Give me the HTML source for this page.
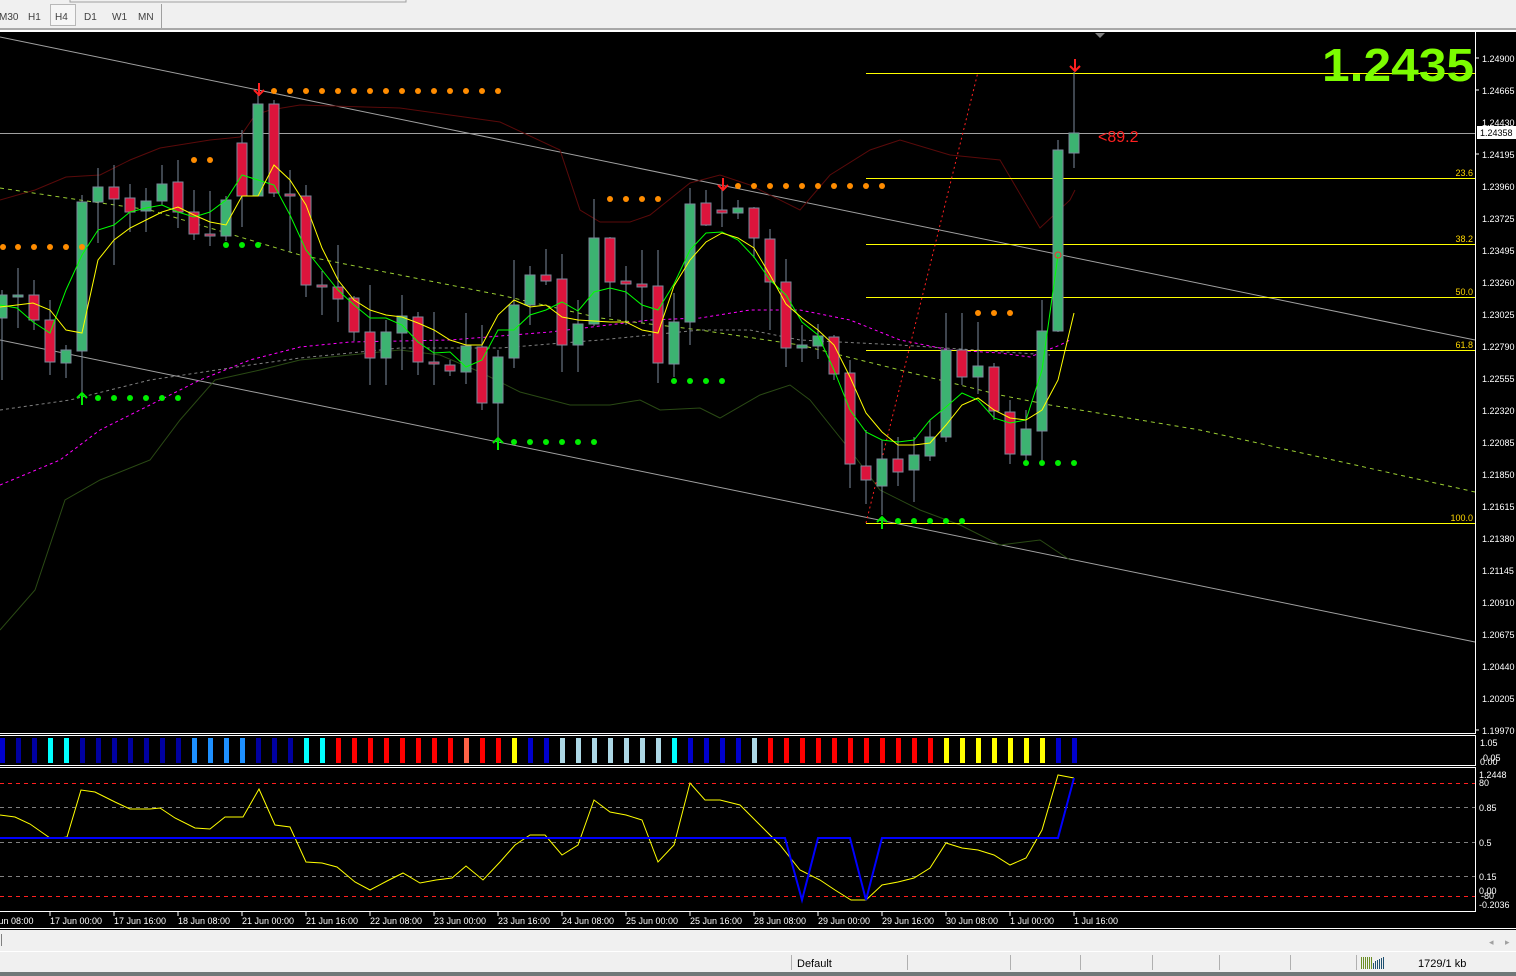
<!DOCTYPE html>
<html><head><meta charset="utf-8"><style>
html,body{margin:0;padding:0;background:#000;width:1516px;height:976px;overflow:hidden}
svg{display:block}
text{font-family:"Liberation Sans",sans-serif}
</style></head><body>
<svg width="1516" height="976" viewBox="0 0 1516 976" xmlns="http://www.w3.org/2000/svg">
<!-- toolbar -->
<rect x="0" y="0" width="1516" height="30" fill="#f0f0f0"/>
<rect x="70" y="-2" width="336" height="4" fill="none" stroke="#a0a0a0"/>
<rect x="50.5" y="4.5" width="25" height="21" fill="#f6f6f6" stroke="#b8b8b8"/>
<line x1="161.5" y1="4" x2="161.5" y2="28" stroke="#a0a0a0"/>
<g font-size="10" fill="#404040">
<text x="-1" y="20">M30</text><text x="28" y="20">H1</text><text x="55" y="20">H4</text>
<text x="84" y="20">D1</text><text x="112" y="20">W1</text><text x="138" y="20">MN</text>
</g>
<rect x="0" y="28" width="1516" height="2" fill="#a8a8a8"/>
<rect x="0" y="30" width="1516" height="2" fill="#fff"/>
<rect x="0" y="32" width="1516" height="898" fill="#000"/>
<g fill="none" stroke="#fff" stroke-width="1">
<path d="M0 733.5H1475.5V32"/>
<path d="M0 735.5H1475.5V765.5H0"/>
<path d="M0 767.5H1475.5V911.5H0"/>
</g>
<polygon points="1095,33 1105,33 1100,38" fill="#808080"/>
<g stroke="#a0a0a0" stroke-width="1">
<line x1="0" y1="37" x2="1475" y2="340"/>
<line x1="0" y1="340" x2="1475" y2="642"/>
<line x1="0" y1="133.5" x2="1475" y2="133.5"/>
</g>
<polyline fill="none" stroke="#5a0a0a" stroke-width="1" points="0,200 35,190 66,177 100,175 130,160 160,148 210,140 240,137 255,115 270,110 300,105 400,108 450,115 500,122 560,150 580,210 600,222 630,222 650,215 690,183 720,175 750,185 800,210 830,175 870,150 900,140 950,155 1000,160 1040,228 1070,200 1075,190"/>
<polyline fill="none" stroke="#2a4a14" stroke-width="1" points="0,630 35,590 65,500 100,480 150,460 180,420 215,380 260,370 300,360 350,355 400,350 440,355 480,372 520,392 570,405 610,405 640,400 660,410 700,408 720,418 760,395 790,385 810,400 850,450 880,490 920,510 960,525 1000,545 1040,540 1070,560"/>
<polyline fill="none" stroke="#808080" stroke-width="1" stroke-dasharray="3,3" points="0,410 70,400 150,380 250,365 300,358 400,348 500,348 600,340 700,330 750,330 800,340 900,345 1050,355"/>
<polyline fill="none" stroke="#ff00ff" stroke-width="1" stroke-dasharray="3,3" points="0,485 60,460 100,430 150,405 200,380 250,360 300,347 350,342 450,340 550,332 650,320 700,318 750,310 800,310 850,320 900,340 950,350 1000,353 1030,357 1060,345 1070,340"/>
<polyline fill="none" stroke="#9acd32" stroke-width="1" stroke-dasharray="4,4" points="0,188 80,200 150,210 250,240 300,255 400,275 500,295 600,318 700,330 800,345 900,370 1000,395 1050,405 1200,430 1475,492"/>
<g stroke="#ffff00" stroke-width="1" shape-rendering="crispEdges">
<line x1="866" y1="73.5" x2="1475" y2="73.5"/><line x1="866" y1="178.5" x2="1475" y2="178.5"/>
<line x1="866" y1="244.5" x2="1475" y2="244.5"/><line x1="866" y1="297.5" x2="1475" y2="297.5"/>
<line x1="866" y1="350.5" x2="1475" y2="350.5"/><line x1="866" y1="523.5" x2="1475" y2="523.5"/>
</g>
<g font-size="9" fill="#ffd700" text-anchor="end">
<text x="1473" y="176">23.6</text><text x="1473" y="242">38.2</text><text x="1473" y="295">50.0</text>
<text x="1473" y="348">61.8</text><text x="1473" y="521">100.0</text>
</g>
<line x1="866" y1="523" x2="978" y2="72" stroke="#ff2020" stroke-width="1" stroke-dasharray="2,3"/>
<g stroke="#7b8a9c" stroke-width="1">
<line x1="2" y1="290" x2="2" y2="380"/><rect x="-3" y="295" width="10" height="23" fill="#3cb371"/>
<line x1="18" y1="268" x2="18" y2="328"/><rect x="13" y="295" width="10" height="2" fill="#3cb371"/>
<line x1="34" y1="280" x2="34" y2="330"/><rect x="29" y="295" width="10" height="25" fill="#dc143c"/>
<line x1="50" y1="300" x2="50" y2="375"/><rect x="45" y="320" width="10" height="42" fill="#dc143c"/>
<line x1="66" y1="345" x2="66" y2="378"/><rect x="61" y="350" width="10" height="13" fill="#3cb371"/>
<line x1="82" y1="195" x2="82" y2="395"/><rect x="77" y="202" width="10" height="149" fill="#3cb371"/>
<line x1="98" y1="168" x2="98" y2="243"/><rect x="93" y="187" width="10" height="15" fill="#3cb371"/>
<line x1="114" y1="165" x2="114" y2="265"/><rect x="109" y="187" width="10" height="12" fill="#dc143c"/>
<line x1="130" y1="184" x2="130" y2="232"/><rect x="125" y="198" width="10" height="14" fill="#dc143c"/>
<line x1="146" y1="188" x2="146" y2="232"/><rect x="141" y="201" width="10" height="10" fill="#3cb371"/>
<line x1="162" y1="165" x2="162" y2="205"/><rect x="157" y="184" width="10" height="17" fill="#3cb371"/>
<line x1="178" y1="160" x2="178" y2="228"/><rect x="173" y="182" width="10" height="30" fill="#dc143c"/>
<line x1="194" y1="190" x2="194" y2="240"/><rect x="189" y="212" width="10" height="22" fill="#dc143c"/>
<line x1="210" y1="191" x2="210" y2="246"/><rect x="205" y="234" width="10" height="2" fill="#dc143c"/>
<line x1="226" y1="196" x2="226" y2="241"/><rect x="221" y="200" width="10" height="36" fill="#3cb371"/>
<line x1="242" y1="130" x2="242" y2="227"/><rect x="237" y="143" width="10" height="53" fill="#dc143c"/>
<line x1="258" y1="95" x2="258" y2="196"/><rect x="253" y="104" width="10" height="92" fill="#3cb371"/>
<line x1="274" y1="100" x2="274" y2="197"/><rect x="269" y="104" width="10" height="89" fill="#dc143c"/>
<line x1="290" y1="170" x2="290" y2="252"/><rect x="285" y="194" width="10" height="2" fill="#dc143c"/>
<line x1="306" y1="185" x2="306" y2="297"/><rect x="301" y="196" width="10" height="89" fill="#dc143c"/>
<line x1="322" y1="271" x2="322" y2="315"/><rect x="317" y="285" width="10" height="2" fill="#dc143c"/>
<line x1="338" y1="245" x2="338" y2="322"/><rect x="333" y="287" width="10" height="12" fill="#dc143c"/>
<line x1="354" y1="296" x2="354" y2="341"/><rect x="349" y="298" width="10" height="34" fill="#dc143c"/>
<line x1="370" y1="285" x2="370" y2="385"/><rect x="365" y="332" width="10" height="26" fill="#dc143c"/>
<line x1="386" y1="320" x2="386" y2="385"/><rect x="381" y="332" width="10" height="26" fill="#3cb371"/>
<line x1="402" y1="295" x2="402" y2="370"/><rect x="397" y="316" width="10" height="17" fill="#3cb371"/>
<line x1="418" y1="312" x2="418" y2="375"/><rect x="413" y="317" width="10" height="45" fill="#dc143c"/>
<line x1="434" y1="312" x2="434" y2="385"/><rect x="429" y="362" width="10" height="2" fill="#dc143c"/>
<line x1="450" y1="360" x2="450" y2="376"/><rect x="445" y="365" width="10" height="6" fill="#dc143c"/>
<line x1="466" y1="313" x2="466" y2="384"/><rect x="461" y="346" width="10" height="26" fill="#3cb371"/>
<line x1="482" y1="325" x2="482" y2="410"/><rect x="477" y="347" width="10" height="56" fill="#dc143c"/>
<line x1="498" y1="350" x2="498" y2="445"/><rect x="493" y="357" width="10" height="46" fill="#3cb371"/>
<line x1="514" y1="260" x2="514" y2="368"/><rect x="509" y="305" width="10" height="53" fill="#3cb371"/>
<line x1="530" y1="266" x2="530" y2="325"/><rect x="525" y="275" width="10" height="30" fill="#3cb371"/>
<line x1="546" y1="249" x2="546" y2="285"/><rect x="541" y="275" width="10" height="6" fill="#dc143c"/>
<line x1="562" y1="254" x2="562" y2="372"/><rect x="557" y="279" width="10" height="66" fill="#dc143c"/>
<line x1="578" y1="300" x2="578" y2="372"/><rect x="573" y="324" width="10" height="21" fill="#3cb371"/>
<line x1="594" y1="199" x2="594" y2="326"/><rect x="589" y="238" width="10" height="86" fill="#3cb371"/>
<line x1="610" y1="237" x2="610" y2="317"/><rect x="605" y="238" width="10" height="44" fill="#dc143c"/>
<line x1="626" y1="266" x2="626" y2="325"/><rect x="621" y="281" width="10" height="3" fill="#dc143c"/>
<line x1="642" y1="250" x2="642" y2="323"/><rect x="637" y="284" width="10" height="3" fill="#dc143c"/>
<line x1="658" y1="250" x2="658" y2="383"/><rect x="653" y="286" width="10" height="77" fill="#dc143c"/>
<line x1="674" y1="293" x2="674" y2="377"/><rect x="669" y="322" width="10" height="42" fill="#3cb371"/>
<line x1="690" y1="188" x2="690" y2="345"/><rect x="685" y="204" width="10" height="118" fill="#3cb371"/>
<line x1="706" y1="190" x2="706" y2="226"/><rect x="701" y="203" width="10" height="22" fill="#dc143c"/>
<line x1="722" y1="188" x2="722" y2="227"/><rect x="717" y="210" width="10" height="3" fill="#dc143c"/>
<line x1="738" y1="200" x2="738" y2="219"/><rect x="733" y="208" width="10" height="5" fill="#3cb371"/>
<line x1="754" y1="207" x2="754" y2="258"/><rect x="749" y="208" width="10" height="30" fill="#dc143c"/>
<line x1="770" y1="229" x2="770" y2="330"/><rect x="765" y="239" width="10" height="43" fill="#dc143c"/>
<line x1="786" y1="259" x2="786" y2="367"/><rect x="781" y="282" width="10" height="66" fill="#dc143c"/>
<line x1="802" y1="325" x2="802" y2="362"/><rect x="797" y="345" width="10" height="3" fill="#3cb371"/>
<line x1="818" y1="324" x2="818" y2="359"/><rect x="813" y="336" width="10" height="10" fill="#3cb371"/>
<line x1="834" y1="335" x2="834" y2="380"/><rect x="829" y="337" width="10" height="37" fill="#dc143c"/>
<line x1="850" y1="360" x2="850" y2="488"/><rect x="845" y="373" width="10" height="91" fill="#dc143c"/>
<line x1="866" y1="430" x2="866" y2="504"/><rect x="861" y="466" width="10" height="14" fill="#dc143c"/>
<line x1="882" y1="440" x2="882" y2="515"/><rect x="877" y="459" width="10" height="27" fill="#3cb371"/>
<line x1="898" y1="437" x2="898" y2="486"/><rect x="893" y="459" width="10" height="13" fill="#dc143c"/>
<line x1="914" y1="437" x2="914" y2="502"/><rect x="909" y="455" width="10" height="15" fill="#3cb371"/>
<line x1="930" y1="420" x2="930" y2="461"/><rect x="925" y="437" width="10" height="19" fill="#3cb371"/>
<line x1="946" y1="313" x2="946" y2="442"/><rect x="941" y="350" width="10" height="87" fill="#3cb371"/>
<line x1="962" y1="313" x2="962" y2="385"/><rect x="957" y="350" width="10" height="27" fill="#dc143c"/>
<line x1="978" y1="322" x2="978" y2="394"/><rect x="973" y="366" width="10" height="11" fill="#3cb371"/>
<line x1="994" y1="363" x2="994" y2="420"/><rect x="989" y="367" width="10" height="44" fill="#dc143c"/>
<line x1="1010" y1="400" x2="1010" y2="464"/><rect x="1005" y="412" width="10" height="42" fill="#dc143c"/>
<line x1="1026" y1="410" x2="1026" y2="465"/><rect x="1021" y="429" width="10" height="26" fill="#3cb371"/>
<line x1="1042" y1="300" x2="1042" y2="465"/><rect x="1037" y="331" width="10" height="100" fill="#3cb371"/>
<line x1="1058" y1="140" x2="1058" y2="332"/><rect x="1053" y="150" width="10" height="181" fill="#3cb371"/>
<line x1="1074" y1="72" x2="1074" y2="168"/><rect x="1069" y="133" width="10" height="20" fill="#3cb371"/>
</g>
<polyline fill="none" stroke="#00ff00" stroke-width="1" points="0,305 17,308 33,322 50,333 66,290 82,255 98,230 114,225 130,212 146,208 162,205 178,212 194,217 210,212 226,200 242,175 258,180 274,185 290,215 306,250 322,270 338,290 354,305 370,318 386,318 402,325 418,342 434,353 450,352 466,367 482,360 498,330 514,330 530,315 546,310 562,302 578,311 594,292 610,288 626,292 642,305 658,310 674,284 690,250 706,233 722,232 738,240 754,257 770,280 786,295 802,322 818,335 834,370 850,410 866,432 882,440 898,442 914,440 930,420 946,407 962,393 978,400 994,418 1010,423 1026,420 1042,370 1058,255"/>
<polyline fill="none" stroke="#ffff00" stroke-width="1" points="0,307 17,305 33,303 50,310 66,330 82,333 98,260 114,240 130,228 146,220 162,212 178,207 194,215 210,222 226,225 242,196 258,196 274,165 290,180 306,205 322,248 338,280 354,300 370,310 386,315 402,317 418,323 434,330 450,340 466,345 482,345 498,315 514,300 530,307 546,305 562,317 578,320 594,321 610,322 626,322 642,330 658,333 674,286 690,260 706,242 722,233 738,238 754,248 770,275 786,304 802,318 818,330 834,345 850,377 866,413 882,432 898,445 914,445 930,443 946,425 962,405 978,398 994,410 1010,418 1026,420 1042,410 1058,380 1074,313"/>
<circle cx="1058" cy="255" r="3" fill="none" stroke="#ff3030"/>
<g fill="#ff8c00">
<circle cx="3" cy="247" r="3"/><circle cx="18" cy="247" r="3"/><circle cx="34" cy="247" r="3"/><circle cx="50" cy="247" r="3"/><circle cx="66" cy="247" r="3"/><circle cx="82" cy="247" r="3"/>
<circle cx="194" cy="160" r="3"/><circle cx="210" cy="160" r="3"/>
<circle cx="274" cy="91" r="3"/><circle cx="290" cy="91" r="3"/><circle cx="306" cy="91" r="3"/><circle cx="322" cy="91" r="3"/><circle cx="338" cy="91" r="3"/><circle cx="354" cy="91" r="3"/><circle cx="370" cy="91" r="3"/><circle cx="386" cy="91" r="3"/><circle cx="402" cy="91" r="3"/><circle cx="418" cy="91" r="3"/><circle cx="434" cy="91" r="3"/><circle cx="450" cy="91" r="3"/><circle cx="466" cy="91" r="3"/><circle cx="482" cy="91" r="3"/><circle cx="498" cy="91" r="3"/>
<circle cx="610" cy="199" r="3"/><circle cx="626" cy="199" r="3"/><circle cx="642" cy="199" r="3"/><circle cx="658" cy="199" r="3"/>
<circle cx="738" cy="186" r="3"/><circle cx="754" cy="186" r="3"/><circle cx="770" cy="186" r="3"/><circle cx="786" cy="186" r="3"/><circle cx="802" cy="186" r="3"/><circle cx="818" cy="186" r="3"/><circle cx="834" cy="186" r="3"/><circle cx="850" cy="186" r="3"/><circle cx="866" cy="186" r="3"/><circle cx="882" cy="186" r="3"/>
<circle cx="978" cy="313" r="3"/><circle cx="994" cy="313" r="3"/><circle cx="1010" cy="313" r="3"/>
</g>
<g fill="#00ee00">
<circle cx="98" cy="398" r="3"/><circle cx="114" cy="398" r="3"/><circle cx="130" cy="398" r="3"/><circle cx="146" cy="398" r="3"/><circle cx="162" cy="398" r="3"/><circle cx="178" cy="398" r="3"/>
<circle cx="226" cy="245" r="3"/><circle cx="242" cy="245" r="3"/><circle cx="258" cy="245" r="3"/>
<circle cx="514" cy="442" r="3"/><circle cx="530" cy="442" r="3"/><circle cx="546" cy="442" r="3"/><circle cx="562" cy="442" r="3"/><circle cx="578" cy="442" r="3"/><circle cx="594" cy="442" r="3"/>
<circle cx="674" cy="381" r="3"/><circle cx="690" cy="381" r="3"/><circle cx="706" cy="381" r="3"/><circle cx="722" cy="381" r="3"/>
<circle cx="898" cy="521" r="3"/><circle cx="914" cy="521" r="3"/><circle cx="930" cy="521" r="3"/><circle cx="946" cy="521" r="3"/><circle cx="962" cy="521" r="3"/>
<circle cx="1026" cy="463" r="3"/><circle cx="1042" cy="463" r="3"/><circle cx="1058" cy="463" r="3"/><circle cx="1074" cy="463" r="3"/>
</g>
<g stroke-width="2" fill="none">
<path d="M259 83V95M254 90L259 95L264 90" stroke="#ff2020"/>
<path d="M723 178V190M718 185L723 190L728 185" stroke="#ff2020"/>
<path d="M1075 59V71M1070 66L1075 71L1080 66" stroke="#ff2020"/>
<path d="M82 405V393M77 398L82 393L87 398" stroke="#00ee00"/>
<path d="M498 450V438M493 443L498 438L503 443" stroke="#00ee00"/>
<path d="M882 529V517M877 522L882 517L887 522" stroke="#00ee00"/>
</g>
<text x="1322" y="81" font-size="46" font-weight="bold" fill="#7cfc00" textLength="152" lengthAdjust="spacingAndGlyphs">1.2435</text>
<text x="1098" y="142" font-size="16" fill="#ff2020">&lt;89.2</text>
<g font-size="9" fill="#fff">
<text x="1482" y="62">1.24900</text><text x="1482" y="94">1.24665</text><text x="1482" y="126">1.24430</text>
<text x="1482" y="158">1.24195</text><text x="1482" y="190">1.23960</text><text x="1482" y="222">1.23725</text>
<text x="1482" y="254">1.23495</text><text x="1482" y="286">1.23260</text><text x="1482" y="318">1.23025</text>
<text x="1482" y="350">1.22790</text><text x="1482" y="382">1.22555</text><text x="1482" y="414">1.22320</text>
<text x="1482" y="446">1.22085</text><text x="1482" y="478">1.21850</text><text x="1482" y="510">1.21615</text>
<text x="1482" y="542">1.21380</text><text x="1482" y="574">1.21145</text><text x="1482" y="606">1.20910</text>
<text x="1482" y="638">1.20675</text><text x="1482" y="670">1.20440</text><text x="1482" y="702">1.20205</text>
<text x="1482" y="734">1.19970</text>
</g>
<g stroke="#fff"><line x1="1476" y1="58" x2="1479" y2="58"/><line x1="1476" y1="90" x2="1479" y2="90"/><line x1="1476" y1="154" x2="1479" y2="154"/><line x1="1476" y1="730" x2="1479" y2="730"/></g>
<rect x="1477" y="126" width="39" height="13" fill="#fff"/>
<text x="1480" y="136" font-size="9" fill="#000">1.24358</text>
<g>
<rect x="0" y="738" width="5" height="25" fill="#0000cd"/>
<rect x="16" y="738" width="5" height="25" fill="#0000a0"/><rect x="32" y="738" width="5" height="25" fill="#0000a0"/>
<rect x="48" y="738" width="5" height="25" fill="#00ffff"/><rect x="64" y="738" width="5" height="25" fill="#00ffff"/>
<rect x="80" y="738" width="5" height="25" fill="#0000a0"/><rect x="96" y="738" width="5" height="25" fill="#0000a0"/><rect x="112" y="738" width="5" height="25" fill="#0000a0"/><rect x="128" y="738" width="5" height="25" fill="#0000a0"/><rect x="144" y="738" width="5" height="25" fill="#0000a0"/><rect x="160" y="738" width="5" height="25" fill="#0000a0"/><rect x="176" y="738" width="5" height="25" fill="#0000a0"/>
<rect x="192" y="738" width="5" height="25" fill="#1e90ff"/><rect x="208" y="738" width="5" height="25" fill="#1e90ff"/><rect x="224" y="738" width="5" height="25" fill="#1e90ff"/><rect x="240" y="738" width="5" height="25" fill="#1e90ff"/>
<rect x="256" y="738" width="5" height="25" fill="#0000a0"/><rect x="272" y="738" width="5" height="25" fill="#0000a0"/><rect x="288" y="738" width="5" height="25" fill="#0000a0"/>
<rect x="304" y="738" width="5" height="25" fill="#00ffff"/><rect x="320" y="738" width="5" height="25" fill="#00ffff"/>
<rect x="336" y="738" width="5" height="25" fill="#ff0000"/><rect x="352" y="738" width="5" height="25" fill="#ff0000"/><rect x="368" y="738" width="5" height="25" fill="#ff0000"/><rect x="384" y="738" width="5" height="25" fill="#ff0000"/><rect x="400" y="738" width="5" height="25" fill="#ff0000"/><rect x="416" y="738" width="5" height="25" fill="#ff0000"/><rect x="432" y="738" width="5" height="25" fill="#ff0000"/><rect x="448" y="738" width="5" height="25" fill="#ff0000"/>
<rect x="464" y="738" width="5" height="25" fill="#ff6347"/><rect x="480" y="738" width="5" height="25" fill="#ff0000"/><rect x="496" y="738" width="5" height="25" fill="#ff0000"/>
<rect x="512" y="738" width="5" height="25" fill="#ffff00"/>
<rect x="528" y="738" width="5" height="25" fill="#0000cd"/><rect x="544" y="738" width="5" height="25" fill="#0000cd"/>
<rect x="560" y="738" width="5" height="25" fill="#add8e6"/><rect x="576" y="738" width="5" height="25" fill="#add8e6"/><rect x="592" y="738" width="5" height="25" fill="#add8e6"/><rect x="608" y="738" width="5" height="25" fill="#add8e6"/><rect x="624" y="738" width="5" height="25" fill="#add8e6"/><rect x="640" y="738" width="5" height="25" fill="#add8e6"/><rect x="656" y="738" width="5" height="25" fill="#add8e6"/>
<rect x="672" y="738" width="5" height="25" fill="#00ffff"/>
<rect x="688" y="738" width="5" height="25" fill="#0000cd"/><rect x="704" y="738" width="5" height="25" fill="#0000cd"/><rect x="720" y="738" width="5" height="25" fill="#0000cd"/><rect x="736" y="738" width="5" height="25" fill="#0000cd"/><rect x="752" y="738" width="5" height="25" fill="#add8e6"/>
<rect x="768" y="738" width="5" height="25" fill="#ff0000"/><rect x="784" y="738" width="5" height="25" fill="#ff0000"/><rect x="800" y="738" width="5" height="25" fill="#ff0000"/><rect x="816" y="738" width="5" height="25" fill="#ff0000"/><rect x="832" y="738" width="5" height="25" fill="#ff0000"/><rect x="848" y="738" width="5" height="25" fill="#ff0000"/><rect x="864" y="738" width="5" height="25" fill="#ff0000"/><rect x="880" y="738" width="5" height="25" fill="#ff0000"/><rect x="896" y="738" width="5" height="25" fill="#ff0000"/><rect x="912" y="738" width="5" height="25" fill="#ff0000"/><rect x="928" y="738" width="5" height="25" fill="#ff0000"/>
<rect x="944" y="738" width="5" height="25" fill="#ffff00"/><rect x="960" y="738" width="5" height="25" fill="#ffff00"/><rect x="976" y="738" width="5" height="25" fill="#ffff00"/><rect x="992" y="738" width="5" height="25" fill="#ffff00"/><rect x="1008" y="738" width="5" height="25" fill="#ffff00"/><rect x="1024" y="738" width="5" height="25" fill="#ffff00"/><rect x="1040" y="738" width="5" height="25" fill="#ffff00"/>
<rect x="1056" y="738" width="5" height="25" fill="#0000cd"/><rect x="1072" y="738" width="5" height="25" fill="#0000cd"/>
</g>
<g font-size="9" fill="#fff">
<text x="1480" y="746">1.05</text><text x="1483" y="761">0.05</text><text x="1480" y="765">0.00</text>
</g>
<g stroke-width="1" stroke-dasharray="4,4" shape-rendering="crispEdges">
<line x1="0" y1="783.5" x2="1475" y2="783.5" stroke="#ff2020"/>
<line x1="0" y1="807.5" x2="1475" y2="807.5" stroke="#808080"/>
<line x1="0" y1="842.5" x2="1475" y2="842.5" stroke="#808080"/>
<line x1="0" y1="876.5" x2="1475" y2="876.5" stroke="#808080"/>
<line x1="0" y1="896.5" x2="1475" y2="896.5" stroke="#ff2020"/>
</g>
<polyline fill="none" stroke="#ffff00" stroke-width="1" points="0,815 15,817 30,824 50,838 60,838 67,837 81,790 95,792 115,802 130,809 150,809 160,808 175,818 195,828 210,829 225,817 243,817 259,789 275,825 290,827 306,862 322,863 337,867 355,882 370,890 387,881 403,873 420,883 436,880 452,878 466,866 483,880 500,862 515,845 530,835 545,835 562,855 578,845 594,800 610,812 626,815 642,820 658,862 674,845 690,783 705,800 720,800 740,805 760,825 780,845 800,870 820,880 835,890 851,900 866,900 882,885 898,882 914,878 930,868 946,843 962,848 978,850 994,855 1010,865 1026,858 1042,830 1058,775 1074,778"/>
<polyline fill="none" stroke="#0000ff" stroke-width="2" points="0,838 785,838 802,900 818,838 850,838 866,900 882,838 1058,838 1074,778"/>
<g font-size="9" fill="#fff">
<text x="1479" y="778">1.2448</text><text x="1479" y="786">80</text><text x="1479" y="811">0.85</text>
<text x="1479" y="846">0.5</text><text x="1479" y="880">0.15</text><text x="1479" y="894">0.00</text>
<text x="1481" y="899">-80</text><text x="1479" y="908">-0.2036</text>
</g>
<g stroke="#fff"><line x1="50" y1="912" x2="50" y2="916"/><line x1="114" y1="912" x2="114" y2="916"/><line x1="178" y1="912" x2="178" y2="916"/><line x1="242" y1="912" x2="242" y2="916"/><line x1="306" y1="912" x2="306" y2="916"/><line x1="370" y1="912" x2="370" y2="916"/><line x1="434" y1="912" x2="434" y2="916"/><line x1="498" y1="912" x2="498" y2="916"/><line x1="562" y1="912" x2="562" y2="916"/><line x1="626" y1="912" x2="626" y2="916"/><line x1="690" y1="912" x2="690" y2="916"/><line x1="754" y1="912" x2="754" y2="916"/><line x1="818" y1="912" x2="818" y2="916"/><line x1="882" y1="912" x2="882" y2="916"/><line x1="946" y1="912" x2="946" y2="916"/><line x1="1010" y1="912" x2="1010" y2="916"/><line x1="1074" y1="912" x2="1074" y2="916"/></g>
<g font-size="9" fill="#fff">
<text x="-6" y="924">Jun 08:00</text><text x="50" y="924">17 Jun 00:00</text><text x="114" y="924">17 Jun 16:00</text>
<text x="178" y="924">18 Jun 08:00</text><text x="242" y="924">21 Jun 00:00</text><text x="306" y="924">21 Jun 16:00</text>
<text x="370" y="924">22 Jun 08:00</text><text x="434" y="924">23 Jun 00:00</text><text x="498" y="924">23 Jun 16:00</text>
<text x="562" y="924">24 Jun 08:00</text><text x="626" y="924">25 Jun 00:00</text><text x="690" y="924">25 Jun 16:00</text>
<text x="754" y="924">28 Jun 08:00</text><text x="818" y="924">29 Jun 00:00</text><text x="882" y="924">29 Jun 16:00</text>
<text x="946" y="924">30 Jun 08:00</text><text x="1010" y="924">1 Jul 00:00</text><text x="1074" y="924">1 Jul 16:00</text>
</g>
<line x1="0" y1="928.5" x2="1516" y2="928.5" stroke="#fff"/>
<rect x="0" y="930" width="1516" height="46" fill="#f0f0f0"/>
<line x1="1.5" y1="934" x2="1.5" y2="946" stroke="#808080"/>
<line x1="0" y1="951.5" x2="1516" y2="951.5" stroke="#fff"/>
<text x="1489" y="945" font-size="9" fill="#a0a0a0">◂</text><text x="1505" y="945" font-size="9" fill="#a0a0a0">▸</text>
<g stroke="#b0b0b0"><line x1="791.5" y1="955" x2="791.5" y2="970"/><line x1="907.5" y1="955" x2="907.5" y2="970"/><line x1="1010.5" y1="955" x2="1010.5" y2="970"/><line x1="1080.5" y1="955" x2="1080.5" y2="970"/><line x1="1152.5" y1="955" x2="1152.5" y2="970"/><line x1="1219.5" y1="955" x2="1219.5" y2="970"/><line x1="1290.5" y1="955" x2="1290.5" y2="970"/><line x1="1356.5" y1="955" x2="1356.5" y2="970"/></g>
<text x="797" y="967" font-size="11" fill="#000">Default</text>
<g fill="#6b8e23"><rect x="1361" y="957" width="1" height="12"/><rect x="1363" y="957" width="1" height="12"/><rect x="1365" y="957" width="1" height="12"/><rect x="1367" y="957" width="1" height="12"/><rect x="1369" y="957" width="1" height="12"/><rect x="1371" y="957" width="1" height="12"/></g>
<g fill="#1e5070"><rect x="1373" y="963" width="1" height="6"/><rect x="1375" y="961" width="1" height="8"/><rect x="1377" y="960" width="1" height="9"/><rect x="1379" y="959" width="1" height="10"/><rect x="1381" y="958" width="1" height="11"/><rect x="1383" y="957" width="1" height="12"/></g>
<text x="1418" y="967" font-size="11" fill="#000">1729/1 kb</text>
<rect x="0" y="972" width="1516" height="4" fill="#707878"/>
</svg>
</body></html>
